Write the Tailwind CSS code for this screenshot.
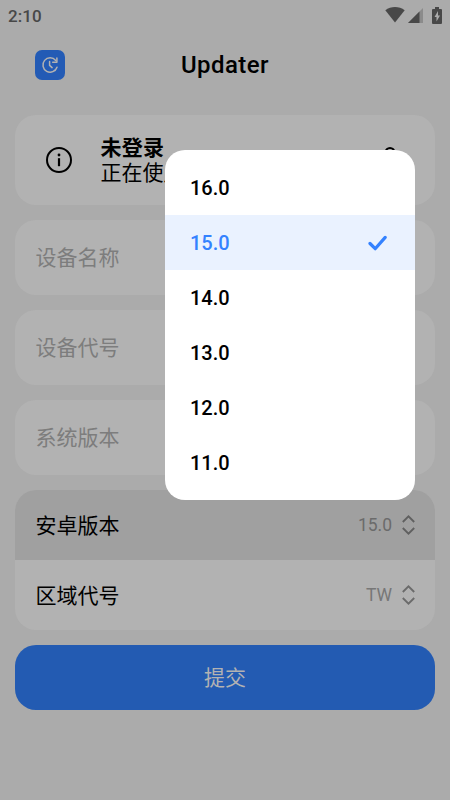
<!DOCTYPE html>
<html lang="zh-CN">
<head>
<meta charset="utf-8">
<meta name="viewport" content="width=device-width, initial-scale=1">
<title>Updater</title>
<script src="https://cdn.jsdelivr.net/npm/@tailwindcss/browser@4"></script>
</head>
<body class="relative h-[800px] w-[450px] overflow-hidden bg-[#ababab] text-black font-[Roboto,'Noto_Sans_CJK_SC',sans-serif]">
  <div class="flex h-[30px] items-center justify-between pl-2 pr-[8px] text-[#484848]">
    <span class="pt-[2px] text-[17px] leading-5 font-medium tracking-[0.1px]">2:10</span>
    <div class="flex items-center">
      <svg class="h-[16px] w-[20px]" viewBox="0 0 20 16" fill="currentColor"><path d="M0.3 3.3C6-1 14-1 19.7 3.3L10 15.6Z"/></svg>
      <svg class="ml-[3px] h-[15px] w-[15px]" viewBox="0 0 15 15"><path d="M0 15 15 0V15Z" fill="#8b8b8b"/><path d="M0 15 11.5 3.5V15Z" fill="currentColor"/></svg>
      <svg class="ml-[9px] h-[17px] w-[10px]" viewBox="0 0 10 17"><path d="M3 0h4v2h2q1 0 1 1v13q0 1-1 1H1q-1 0-1-1V3q0-1 1-1h2Z" fill="currentColor"/><path d="M6 4 2.5 10h2v4.5L8 8.5H6Z" fill="#ababab"/></svg>
    </div>
  </div>

  <header class="grid h-[85px] grid-cols-[1fr_auto_1fr] items-start pt-5 pl-[35px] pr-[35px]">
    <div class="flex h-[30px] w-[30px] items-center justify-center rounded-[7px] bg-[#235bb5]">
      <svg class="h-[18px] w-[18px]" viewBox="0 0 18 18" fill="none" stroke="#b2b2b2" stroke-width="1.5" stroke-linecap="round" stroke-linejoin="round"><path d="M16 11.2A7.2 7.2 0 1 1 14.7 4.4"/><path d="M15.9 2v4.3h-4.2"/><path d="M8.6 5.4v4l2.5 2.2"/></svg>
    </div>
    <h1 class="text-[24px] leading-[31px] font-medium tracking-[0.45px]">Updater</h1>
  </header>

  <main class="flex flex-col gap-[15px] px-[15px]">
    <section class="flex h-[90px] items-center rounded-[21px] bg-[#b2b2b2] pl-[31px]">
      <svg class="h-[26px] w-[26px]" viewBox="0 0 26 26" fill="none" stroke="black"><circle cx="13" cy="13" r="12" stroke-width="2"/><path d="M13 11.2v8" stroke-width="2.2"/><circle cx="13" cy="8" r="1.4" fill="black" stroke="none"/></svg>
      <div class="ml-[28.5px] pt-[2px] text-[21px] leading-[25px]">
        <p class="font-bold tracking-[0.2px]">未登录</p>
        <p>正在使用</p>
      </div>
      <svg class="mb-[3px] ml-auto mr-[33px] h-[24px] w-[24px]" viewBox="0 0 24 24" fill="none" stroke="black" stroke-width="2"><circle cx="12" cy="5.5" r="4.5"/><path d="M4 23c0-11 16-11 16 0"/></svg>
    </section>
    <div class="flex h-[75px] items-center rounded-[21px] bg-[#b2b2b2] px-[20.5px] pt-[2px] text-[21px] text-[#7d7d7d]">设备名称</div>
    <div class="flex h-[75px] items-center rounded-[21px] bg-[#b2b2b2] px-[20.5px] pt-[2px] text-[21px] text-[#7d7d7d]">设备代号</div>
    <div class="flex h-[75px] items-center rounded-[21px] bg-[#b2b2b2] px-[20.5px] pt-[2px] text-[21px] text-[#7d7d7d]">系统版本</div>
    <section class="overflow-hidden rounded-[21px] bg-[#b2b2b2]">
      <div class="flex h-[70px] items-center bg-[#a0a0a0] pl-[20.5px] pr-5 text-[21px]">
        <span class="pt-[3px]">安卓版本</span>
        <span class="ml-auto text-[17.5px] text-[#6b6b6b]">15.0</span>
        <svg class="ml-[10px] h-[20px] w-[13px]" viewBox="0 0 13 20" fill="none" stroke="#606060" stroke-width="1.9"><path d="M.8 7 6.5 1.4 12.2 7M.8 13l5.7 5.6L12.2 13"/></svg>
      </div>
      <div class="flex h-[70px] items-center pl-[20.5px] pr-5 text-[21px]">
        <span class="pt-[3px]">区域代号</span>
        <span class="ml-auto text-[17.5px] text-[#777]">TW</span>
        <svg class="ml-[10px] h-[20px] w-[13px]" viewBox="0 0 13 20" fill="none" stroke="#6b6b6b" stroke-width="1.9"><path d="M.8 7 6.5 1.4 12.2 7M.8 13l5.7 5.6L12.2 13"/></svg>
      </div>
    </section>
    <button class="h-[65px] rounded-[21px] bg-[#235bb2] pt-[2px] text-[21px] text-[#b2b2b2]">提交</button>
  </main>

  <div class="absolute left-[165px] top-[150px] flex h-[350px] w-[250px] flex-col overflow-hidden rounded-[20px] bg-white pt-[10px] text-[20px] font-medium">
    <div class="flex h-[55px] items-center px-[25px]">16.0</div>
    <div class="flex h-[55px] items-center justify-between bg-[#eaf2ff] pl-[25px] pr-[28px] text-[#3482ff]">
      <span>15.0</span>
      <svg class="h-[16px] w-[19px]" viewBox="0 0 19 16" fill="none" stroke="currentColor" stroke-width="3.2" stroke-linecap="round" stroke-linejoin="round"><path d="M2 8.5 7.2 13.7 17.2 2.4"/></svg>
    </div>
    <div class="flex h-[55px] items-center px-[25px]">14.0</div>
    <div class="flex h-[55px] items-center px-[25px]">13.0</div>
    <div class="flex h-[55px] items-center px-[25px]">12.0</div>
    <div class="flex h-[55px] items-center px-[25px]">11.0</div>
  </div>
</body>
</html>
